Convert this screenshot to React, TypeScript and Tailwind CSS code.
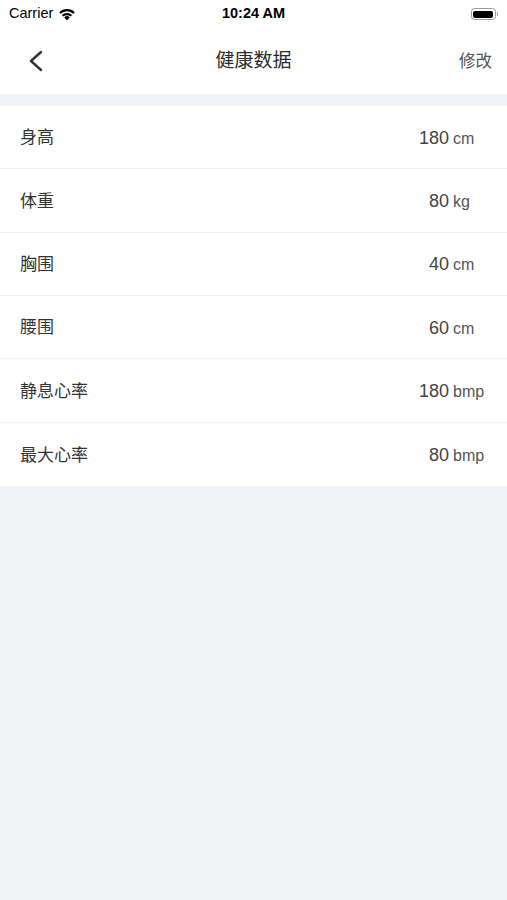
import React from 'react'

type Row = { label: string; value: string; unit: string }

const rows: Row[] = [
  { label: '身高', value: '180', unit: 'cm' },
  { label: '体重', value: '80', unit: 'kg' },
  { label: '胸围', value: '40', unit: 'cm' },
  { label: '腰围', value: '60', unit: 'cm' },
  { label: '静息心率', value: '180', unit: 'bmp' },
  { label: '最大心率', value: '80', unit: 'bmp' },
]

const font = { fontFamily: '"Liberation Sans", "Noto Sans CJK SC", sans-serif' }

const StatusBar = () => (
  <div className="relative flex h-[28px] items-center px-[9px] text-[14.5px] text-black">
    <div className="flex items-center gap-[5px]">
      <span>Carrier</span>
      <svg width="18" height="13" viewBox="0 0 18 13">
        <path d="M9 12.5 L6.2 9.4 A4 4 0 0 1 11.8 9.4 Z" fill="#000" />
        <path d="M3.9 7.1 A7.3 7.3 0 0 1 14.1 7.1 L12.6 8.6 A5.2 5.2 0 0 0 5.4 8.6 Z" fill="#000" />
        <path d="M1.2 4.3 A11 11 0 0 1 16.8 4.3 L15.3 5.8 A8.9 8.9 0 0 0 2.7 5.8 Z" fill="#000" />
      </svg>
    </div>
    <span className="absolute left-1/2 -translate-x-1/2 font-bold">10:24 AM</span>
    <div className="ml-auto flex items-center">
      <div className="flex h-[12px] w-[25px] items-center rounded-[3.5px] border border-[#999] p-[1.5px]">
        <div className="h-full w-full rounded-[2px] bg-black" />
      </div>
      <div className="ml-[1px] h-[4px] w-[1.5px] rounded-r-sm bg-[#999]" />
    </div>
  </div>
)

const NavBar = () => (
  <div className="relative flex h-[66px] items-center justify-between bg-white">
    <button className="flex h-full w-[70px] items-center pl-[28px]">
      <svg width="16" height="22" viewBox="0 0 16 22">
        <polyline points="13,2 3,11 13,20" fill="none" stroke="#333" strokeWidth="2.4" strokeLinecap="round" strokeLinejoin="round" />
      </svg>
    </button>
    <span className="absolute left-1/2 -translate-x-1/2 text-[19px] text-[#2b2b2b]">健康数据</span>
    <span className="pr-[15px] text-[16.5px] text-[#555]">修改</span>
  </div>
)

export default function App() {
  return (
    <div className="min-h-[900px] bg-[#f2f3f5]" style={font}>
      <div className="bg-white">
        <StatusBar />
        <NavBar />
      </div>
      <div className="h-[12px] bg-[#f2f3f5]" />
      <div className="bg-white">
        {rows.map((row, i) => (
          <div
            key={row.label}
            className={
              'flex h-[63.33px] items-center pt-[2px] pl-[20px] pr-[18px] ' +
              (i < rows.length - 1 ? 'border-b border-[#f0f0f0]' : '')
            }
          >
            <span className="text-[17px] text-[#333]">{row.label}</span>
            <div className="ml-auto flex items-baseline">
              <span className="text-[18px] text-[#444]">{row.value}</span>
              <span className="ml-[4px] w-[36px] text-[16px] text-[#555]">{row.unit}</span>
            </div>
          </div>
        ))}
      </div>
    </div>
  )
}
